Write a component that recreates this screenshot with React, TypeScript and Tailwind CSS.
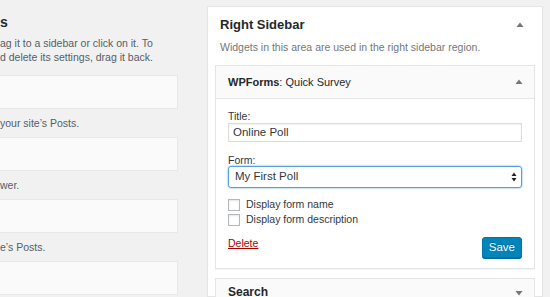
import React from "react";

const font = { fontFamily: '"Liberation Sans", Arial, sans-serif' };

function Arrow({ down = false }: { down?: boolean }) {
	return (
		<svg width="8" height="6" viewBox="0 0 8 6" className="shrink-0">
			{down ? (
				<polygon points="0.5,1 7.5,1 4,5.5" fill="#72777c" />
			) : (
				<polygon points="0.5,5 7.5,5 4,0.5" fill="#72777c" />
			)}
		</svg>
	);
}

function LeftColumn() {
	const items = ["your site’s Posts.", "wer.", "e’s Posts."];
	return (
		<div className="w-[178px] shrink-0 overflow-hidden">
			<h2 className="mt-[14px] h-[16px] text-[14px] font-semibold leading-[16px] text-[#23282d]">s</h2>
			<p className="mt-[6px] text-[10.5px] leading-[14px] text-[#555d66] whitespace-nowrap">
				ag it to a sidebar or click on it. To
				<br />
				d delete its settings, drag it back.
			</p>
			<div className="-ml-1 mt-[11px] h-[34px] border border-[#e8e8e8] bg-[#fafafa]" />
			{items.map((t) => (
				<React.Fragment key={t}>
					<p className="mt-[7px] mb-[7px] text-[10.5px] leading-[14px] text-[#555d66] whitespace-nowrap">{t}</p>
					<div className="-ml-1 h-[34px] border border-[#e8e8e8] bg-[#fafafa]" />
				</React.Fragment>
			))}
		</div>
	);
}

function Checkbox({ label }: { label: string }) {
	return (
		<label className="flex items-center gap-[6px] h-[14px]">
			<span className="w-[12px] h-[12px] border border-[#b4b9be] bg-white shadow-[inset_0_1px_2px_rgba(0,0,0,0.1)]" />
			<span className="text-[10.5px] text-[#32373c]">{label}</span>
		</label>
	);
}

function QuickSurvey() {
	return (
		<div className="border border-[#e5e5e5] shadow-[0_1px_1px_rgba(0,0,0,0.04)]">
			<div className="flex items-center justify-between h-[33px] pl-[12px] pr-[11px] bg-[#fafafa] border-b border-[#e5e5e5]">
				<span className="text-[11px] font-semibold text-[#23282d]">
					WPForms<span className="font-normal">: Quick Survey</span>
				</span>
				<Arrow />
			</div>
			<div className="bg-white px-[12px] pt-[11px] pb-[10px]">
				<div className="text-[10.5px] leading-[12px] text-[#32373c]">Title:</div>
				<div className="mt-[1px] h-[19px] border border-[#dddddd] shadow-[inset_0_1px_2px_rgba(0,0,0,0.07)] flex items-center px-[4px] text-[11.5px] text-[#32373c]">
					Online Poll
				</div>
				<div className="mt-[12px] text-[10.5px] leading-[12px] text-[#32373c]">Form:</div>
				<div className="h-[22px] rounded-[3px] border border-[#5b9dd9] shadow-[0_0_2px_rgba(30,140,190,0.8)] flex items-center justify-between pl-[6px] pr-[4px] text-[11.5px] text-[#32373c]">
					<span>My First Poll</span>
					<svg width="6" height="10" viewBox="0 0 6 10">
						<polygon points="0.5,4 5.5,4 3,0.5" fill="#222" />
						<polygon points="0.5,6 5.5,6 3,9.5" fill="#222" />
					</svg>
				</div>
				<div className="mt-[10px] flex flex-col gap-[1px]">
					<Checkbox label="Display form name" />
					<Checkbox label="Display form description" />
				</div>
				<div className="mt-[10px] flex items-start justify-between">
					<a className="text-[10.5px] leading-[12px] text-[#a00] underline">Delete</a>
					<button className="h-[21px] px-[6px] rounded-[3px] bg-[#0085ba] border border-[#0073aa] shadow-[0_1px_0_#006799] text-[11.5px] leading-[19px] text-white [text-shadow:0_-1px_1px_#006799]">
						Save
					</button>
				</div>
			</div>
		</div>
	);
}

export default function App() {
	return (
		<div style={font} className="w-[550px] h-[297px] overflow-hidden bg-[#f1f1f1] flex">
			<LeftColumn />
			<div className="ml-[29px] mt-[6px] w-[336px] shrink-0 bg-white border border-[#e5e5e5] shadow-[0_1px_1px_rgba(0,0,0,0.04)] px-[7px]">
				<div className="flex items-center justify-between h-[24px] mt-[6px] pl-[5px] pr-[11px]">
					<h2 className="text-[13px] font-bold text-[#23282d]">Right Sidebar</h2>
					<Arrow />
				</div>
				<p className="mt-[2px] pl-[5px] text-[10.5px] leading-[16px] text-[#72777c]">
					Widgets in this area are used in the right sidebar region.
				</p>
				<div className="mt-[10px]">
					<QuickSurvey />
				</div>
				<div className="mt-[9px] border border-[#e5e5e5] bg-[#fafafa] h-[40px] flex items-start justify-between pt-[6px] pl-[12px] pr-[11px]">
					<span className="text-[12px] leading-[14px] font-bold text-[#23282d]">Search</span>
					<div className="mt-[5px]">
						<Arrow down />
					</div>
				</div>
			</div>
		</div>
	);
}
